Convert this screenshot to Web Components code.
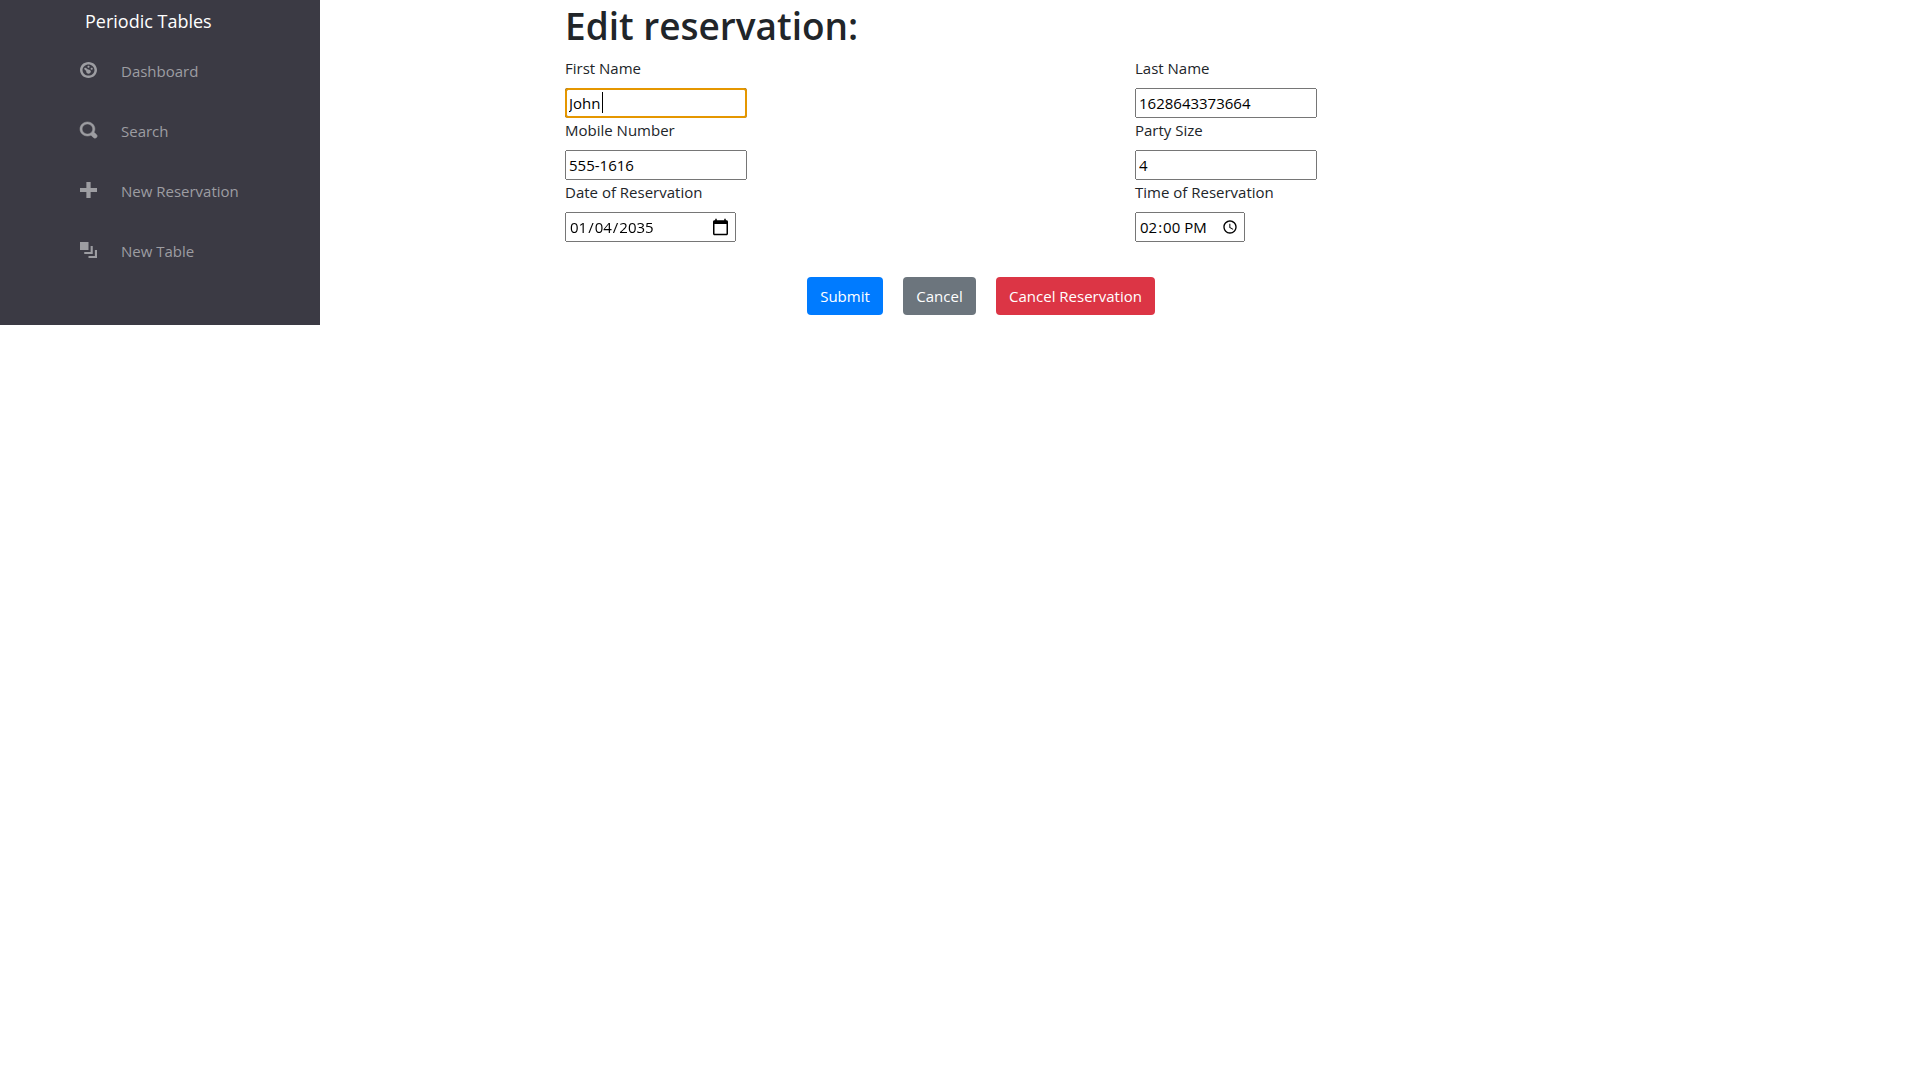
<!DOCTYPE html>
<html lang="en">
<head>
<meta charset="utf-8">
<title>Periodic Tables</title>
<style>
  body { margin: 0; background: #fff; color: #212529; font: 15px/24px "Open Sans", "Noto Sans", sans-serif; }
</style>
</head>
<body>
<app-shell>
  <side-nav slot="nav" brand="Periodic Tables">
    <nav-item icon="dashboard">Dashboard</nav-item>
    <nav-item icon="search">Search</nav-item>
    <nav-item icon="plus">New Reservation</nav-item>
    <nav-item icon="layers">New Table</nav-item>
  </side-nav>
  <reservation-form>
    <span slot="title">Edit reservation:</span>
    <form-field label="First Name" value="John" active></form-field>
    <form-field label="Last Name" value="1628643373664"></form-field>
    <form-field label="Mobile Number" value="555-1616"></form-field>
    <form-field label="Party Size" value="4"></form-field>
    <form-field label="Date of Reservation" type="date" value="2035-01-04"></form-field>
    <form-field label="Time of Reservation" type="time" value="14:00"></form-field>
    <action-button slot="actions" kind="primary">Submit</action-button>
    <action-button slot="actions" kind="secondary">Cancel</action-button>
    <action-button slot="actions" kind="danger">Cancel Reservation</action-button>
  </reservation-form>
</app-shell>
<script>
const attach = (el, html) => { el.attachShadow({ mode: 'open' }).innerHTML = html; };

const ICONS = {
  dashboard: 'M4 0c-2.2 0-4 1.8-4 4s1.8 4 4 4 4-1.8 4-4-1.8-4-4-4zm0 1.2c1.55 0 2.8 1.25 2.8 2.8s-1.25 2.8-2.8 2.8-2.8-1.25-2.8-2.8 1.25-2.8 2.8-2.8zm0 .7c-.28 0-.5.22-.5.5s.22.5.5.5.5-.22.5-.5-.22-.5-.5-.5zm-1.66 1a.5.5 0 0 0-.19.84l.81.81c-.02.08-.06.16-.06.25 0 .6.5 1.1 1.1 1.1s1.1-.5 1.1-1.1-.5-1.1-1.1-1.1c-.09 0-.17.04-.25.06l-.91-.81a.5.5 0 0 0-.5-.05zm3.16 0c-.28 0-.5.22-.5.5s.22.5.5.5.5-.22.5-.5-.22-.5-.5-.5z',
  search: 'M3.5 0c-1.93 0-3.5 1.57-3.5 3.5s1.57 3.5 3.5 3.5c.59 0 1.17-.14 1.66-.41a1 1 0 0 0 .13.13l1 1a1.02 1.02 0 1 0 1.44-1.44l-1-1a1 1 0 0 0-.16-.13c.27-.49.44-1.06.44-1.66 0-1.93-1.55-3.5-3.5-3.5zm0 1c1.39 0 2.5 1.11 2.5 2.5 0 .66-.24 1.27-.66 1.72a1 1 0 0 0-.13.13c-.44.4-1.05.66-1.72.66-1.39 0-2.5-1.11-2.5-2.5s1.11-2.5 2.5-2.5z',
  plus: 'M3 0v3h-3v2h3v3h2v-3h3v-2h-3v-3h-2z',
  layers: 'M0 0v4h4v-4h-4zm5 2v3h-3v1h4v-4h-1zm2 2v3h-3v1h4v-4h-1z'
};

customElements.define('app-shell', class extends HTMLElement {
  constructor() {
    super();
    attach(this, `<style>
      :host { display: flex; align-items: stretch; }
      .side { flex: 0 0 16.6667%; display: flex; }
      main { flex: 1; min-width: 0; }
      ::slotted([slot=nav]) { flex: 1; }
    </style><div class="side"><slot name="nav"></slot></div><main><slot></slot></main>`);
  }
});

customElements.define('side-nav', class extends HTMLElement {
  constructor() {
    super();
    attach(this, `<style>
      :host { display: block; background: #3b3a44; box-sizing: border-box; padding: 9px 16px 0 80px; }
      a { display: block; padding-left: 5px; color: #fff; font-size: 18px; line-height: 24px; text-decoration: none; }
      nav { display: flex; flex-direction: column; gap: 36px; padding-top: 26px; }
    </style><a href="#"></a><nav><slot></slot></nav>`);
    this.shadowRoot.querySelector('a').textContent = this.getAttribute('brand');
  }
});

customElements.define('nav-item', class extends HTMLElement {
  constructor() {
    super();
    attach(this, `<style>
      :host { display: block; }
      :host([icon=search]) path { stroke: currentColor; stroke-width: .25; }
      a { display: flex; gap: 24px; align-items: flex-start; color: #9d9da2; text-decoration: none; line-height: 24px; }
      svg { width: 17px; height: 16px; flex: none; padding-top: 3px; fill: currentColor; overflow: visible; }
    </style><a href="#"><svg viewBox="0 0 8 8" preserveAspectRatio="none" aria-hidden="true"><path d="${ICONS[this.getAttribute('icon')]}"/></svg><slot></slot></a>`);
  }
});

customElements.define('form-field', class extends HTMLElement {
  constructor() {
    super();
    const type = this.getAttribute('type') || 'text';
    attach(this, `<style>
      :host { display: flex; flex-direction: column; align-items: flex-start; gap: 8px; }
      .box { position: relative; display: flex; }
      input { box-sizing: border-box; height: 30px; width: 182px; margin: 0; padding: 1px 2px; font: inherit; color: #000; caret-color: transparent; }
      input[type=date] { width: 171px; }
      input[type=time] { width: 110px; }
      input[type=date]::-webkit-calendar-picker-indicator { width: 19px; height: 19px; }
      input:focus, :host([active]) input { outline: 2px solid #e59700; outline-offset: -2px; border-radius: 3px; }
      .caret { display: none; position: absolute; left: 37px; top: 4px; width: 1px; height: 21px; background: #000; }
      :host([active]) .caret { display: block; }
    </style><label for="field"></label><div class="box"><input id="field" type="${type}"><i class="caret"></i></div>`);
    this.shadowRoot.querySelector('label').textContent = this.getAttribute('label');
    this.shadowRoot.querySelector('input').value = this.getAttribute('value');
  }
  connectedCallback() {
    if (!this.hasAttribute('active')) return;
    const input = this.shadowRoot.querySelector('input');
    input.focus();
    input.setSelectionRange(input.value.length, input.value.length);
  }
});

customElements.define('action-button', class extends HTMLElement {
  constructor() {
    super();
    attach(this, `<style>
      :host { display: block; --fill: #007bff; --w: 76px; }
      :host([kind=secondary]) { --fill: #6c757d; --w: 73px; }
      :host([kind=danger]) { --fill: #dc3545; --w: 159px; }
      button { box-sizing: border-box; min-width: var(--w); height: 38px; padding: 0 10px; border: 0; border-radius: 4px;
        background: var(--fill); color: #fff; font: inherit; white-space: nowrap; cursor: pointer; }
    </style><button type="button"><slot></slot></button>`);
  }
});

customElements.define('reservation-form', class extends HTMLElement {
  constructor() {
    super();
    attach(this, `<style>
      :host { display: block; box-sizing: border-box; max-width: 1140px; margin: 0 auto; padding: 4px 0 10px 15px; }
      h1 { margin: 0 0 8px; font-size: 37px; line-height: 44px; font-weight: 600; }
      .fields { display: grid; grid-template-columns: 570px 1fr; }
      .actions { display: flex; gap: 20px; padding: 35px 0 0 242px; }
    </style><h1><slot name="title"></slot></h1>
    <form><div class="fields"><slot></slot></div><div class="actions"><slot name="actions"></slot></div></form>`);
  }
});
</script>
</body>
</html>
